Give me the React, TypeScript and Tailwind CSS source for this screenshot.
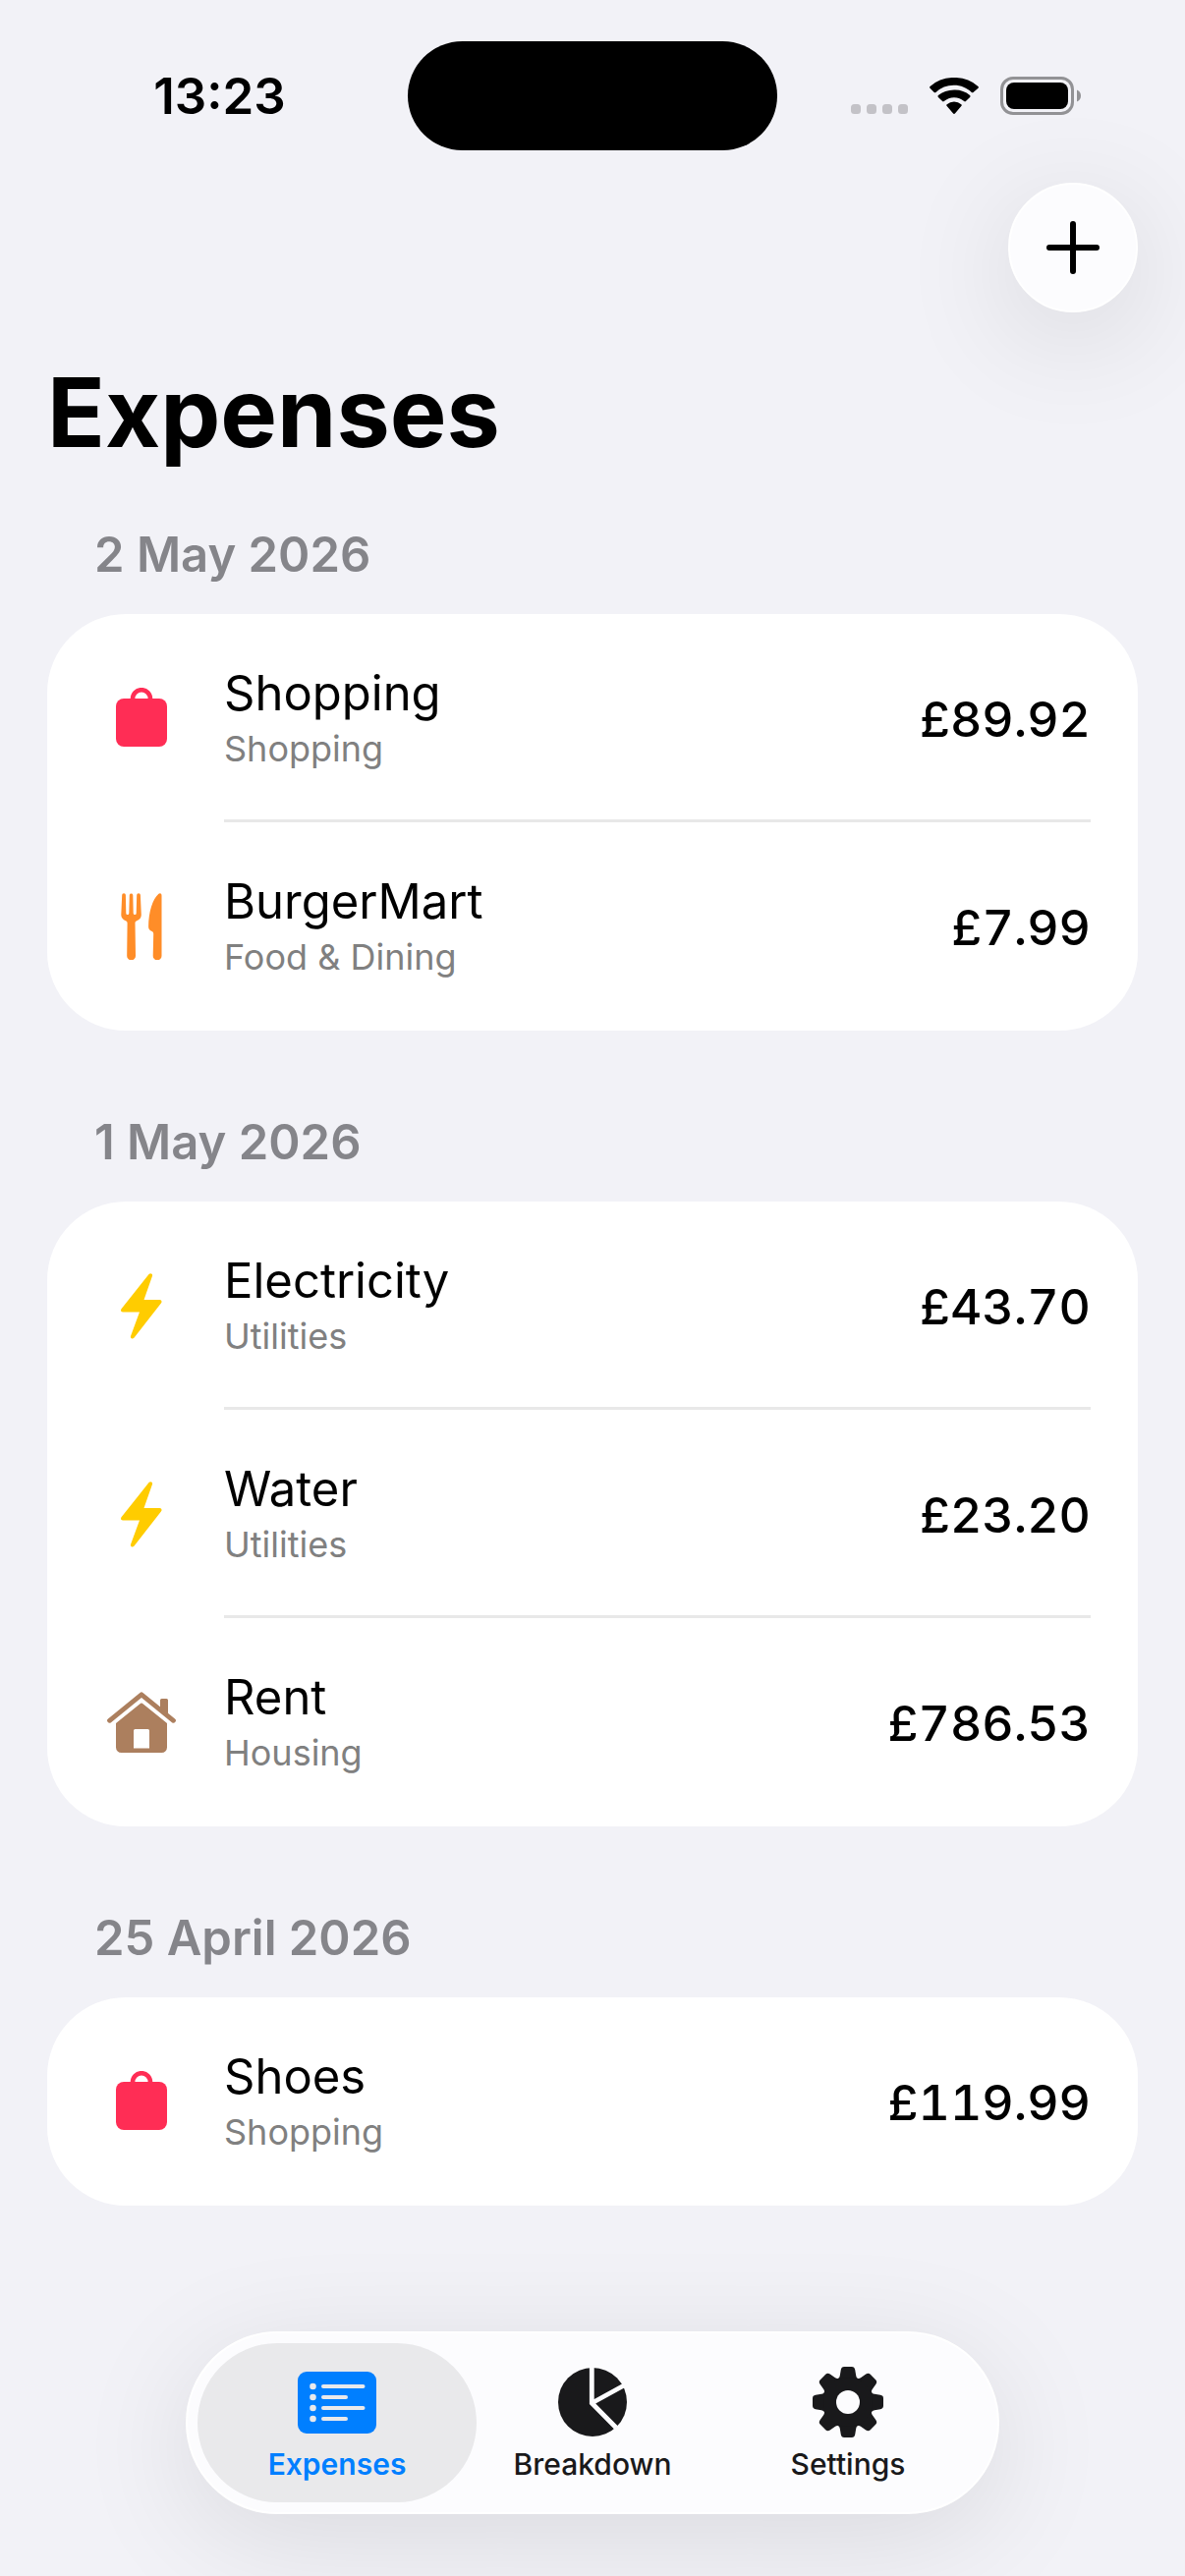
import { useState } from "react";
import type { ReactNode } from "react";

type Category = "Shopping" | "Food & Dining" | "Utilities" | "Housing";

type Expense = {
  id: number;
  name: string;
  category: Category;
  amount: number;
};

type Day = {
  date: string;
  expenses: Expense[];
};

const DAYS: Day[] = [
  {
    date: "2 May 2026",
    expenses: [
      { id: 1, name: "Shopping", category: "Shopping", amount: 89.92 },
      { id: 2, name: "BurgerMart", category: "Food & Dining", amount: 7.99 },
    ],
  },
  {
    date: "1 May 2026",
    expenses: [
      { id: 3, name: "Electricity", category: "Utilities", amount: 43.7 },
      { id: 4, name: "Water", category: "Utilities", amount: 23.2 },
      { id: 5, name: "Rent", category: "Housing", amount: 786.53 },
    ],
  },
  {
    date: "25 April 2026",
    expenses: [{ id: 6, name: "Shoes", category: "Shopping", amount: 119.99 }],
  },
];

function BagIcon() {
  return (
    <svg viewBox="0 0 52 62" className="h-[62px] w-[52px]" fill="#ff2d55" aria-hidden="true">
      <rect x="0" y="11" width="52" height="49" rx="8" />
      <path d="M17 13v-1.500a9 9.300 0 0 1 18 0v1.500" fill="none" stroke="#ff2d55" strokeWidth="4.600" />
    </svg>
  );
}

function CutleryIcon() {
  return (
    <svg viewBox="0 0 42 68" className="h-[68px] w-[42px]" fill="#ff8d28" aria-hidden="true">
      <path d="M1.2 2a1.8 1.8 0 0 1 3.7 0L5.3 20.500a1.500 1.500 0 0 0 3 0L8.800 2a1.800 1.800 0 0 1 3.500 0l.4 18.500a1.500 1.500 0 0 0 3 0L16.200 2a1.800 1.800 0 0 1 3.700 0L20.800 22c.1 3-1.800 5-4.700 6.200-1.300.6-1.700 1.200-1.600 2.600L15 64a4.400 4.400 0 0 1-8.800 0l.4-33.200c0-1.400-.4-2-1.600-2.600C2 27 .2 25 .3 22Z" />
      <path d="M41.500 2.500V64a4.400 4.400 0 0 1-8.800 0l.5-22.500c0-1.200-.4-1.900-1.500-2.500-2.200-1-3.700-2.300-3.600-5C28.200 20 32 6 38.500.7c1.500-1.200 3-.3 3 1.800Z" />
    </svg>
  );
}

function BoltIcon() {
  return (
    <svg viewBox="0 0 42 67" className="h-[67px] w-[42px]" fill="#ffcc00" aria-hidden="true">
      <path d="M28.700.8c1.500-1.500 4-.2 3.300 1.900L23.500 27H39.500c1.900 0 2.700 2 1.400 3.400L13.400 65.700c-1.500 1.800-4.200.4-3.300-1.900L19 39.400H2c-1.900 0-2.600-1.900-1.300-3.300Z" />
    </svg>
  );
}

function HouseIcon() {
  return (
    <svg viewBox="0 0 70 62" className="h-[62px] w-[70px]" fill="#ac7f5e" aria-hidden="true">
      <path d="M2.500 29.300 35 2.800l32.500 26.500" fill="none" stroke="#ac7f5e" strokeWidth="4.800" strokeLinecap="round" strokeLinejoin="round" />
      <path d="M54 18V8.500A1.500 1.500 0 0 1 55.500 7h5A1.500 1.500 0 0 1 62 8.500V24Z" />
      <path fillRule="evenodd" d="M9 32 33.500 12.200a2.400 2.400 0 0 1 3 0L61 32v24.500a5.500 5.500 0 0 1-5.500 5.500h-41A5.500 5.500 0 0 1 9 56.500ZM28.500 38a1.500 1.500 0 0 0-1.500 1.500V57.500H43V39.500A1.500 1.500 0 0 0 41.500 38Z" />
    </svg>
  );
}

const CATEGORY_ICON: Record<Category, () => ReactNode> = {
  Shopping: BagIcon,
  "Food & Dining": CutleryIcon,
  Utilities: BoltIcon,
  Housing: HouseIcon,
};

function ListIcon() {
  const rows = [15, 26, 37, 48];
  return (
    <svg viewBox="0 0 80 63" className="h-[63px] w-20" aria-hidden="true">
      <rect width="80" height="63" rx="9" fill="currentColor" />
      {rows.map((y, i) => (
        <g key={y} fill="#e9e9eb" stroke="#e9e9eb">
          <circle cx="15.500" cy={y} r="3.300" stroke="none" />
          <path d={i % 2 === 0 ? `M26 ${y}H66.500` : `M26 ${y}H49`} strokeWidth="4" strokeLinecap="round" />
        </g>
      ))}
    </svg>
  );
}

function PieIcon() {
  return (
    <svg viewBox="0 0 70 70" className="size-[70px]" fill="none" aria-hidden="true">
      <circle cx="35" cy="35" r="35" fill="currentColor" />
      <path d="M34.300 0V36L59 61M34.300 36 68 17.500" stroke="#fcfcfe" strokeWidth="4.800" />
    </svg>
  );
}

function GearIcon() {
  const teeth = [0, 45, 90, 135, 180, 225, 270, 315];
  return (
    <svg viewBox="-36 -36 72 72" className="size-[72px]" fill="currentColor" aria-hidden="true">
      {teeth.map((angle) => (
        <path
          key={angle}
          transform={`rotate(${angle})`}
          d="M-12.500-22.500C-9.500-24-8.600-24.800-8.200-27L-7.200-33C-6.800-35-5.800-36-3.800-36H3.800C5.800-36 6.800-35 7.200-33L8.200-27C8.600-24.800 9.500-24 12.500-22.500L0 0Z"
        />
      ))}
      <circle r="25" />
      <circle r="12" fill="#fcfcfe" />
    </svg>
  );
}

function StatusBar() {
  return (
    <div className="flex items-center pt-[42px]">
      <div className="flex flex-1 justify-center pl-8 text-[51px] leading-none font-semibold">13:23</div>
      <div className="h-[111px] w-[376px] rounded-full bg-black" />
      <div className="flex flex-1 items-center justify-center gap-[22px] pr-8">
        <svg viewBox="0 0 58 38" className="h-[38px] w-[58px]" fill="#c3c2c7" aria-hidden="true">
          <rect x="0" y="27" width="10" height="10" rx="3.500" />
          <rect x="16" y="27" width="10" height="10" rx="3.500" />
          <rect x="32" y="27" width="10" height="10" rx="3.500" />
          <rect x="48" y="27" width="10" height="10" rx="3.500" />
        </svg>
        <svg viewBox="0 0 50 37" className="h-[37px] w-[50px]" aria-hidden="true">
          <path d="M25 7.700c6.900 0 13.200 2.700 17.800 7.200a1.200 1.200 0 0 0 1.700 0l5-4.200a1.200 1.200 0 0 0 0-1.700A35 35 0 0 0 25 0 35 35 0 0 0 .500 9a1.200 1.200 0 0 0 0 1.700l4.200 4.200a1.200 1.200 0 0 0 1.700 0A26.500 26.500 0 0 1 25 7.700Z" />
          <path d="M25 20.200c3.900 0 7.500 1.500 10.200 3.900a1.200 1.200 0 0 0 1.700 0l4.200-4.200a1.200 1.200 0 0 0 0-1.800A23.500 23.500 0 0 0 25 12.600c-6.200 0-11.900 2.100-16.100 5.500a1.200 1.200 0 0 0 0 1.800l4.200 4.200a1.200 1.200 0 0 0 1.700 0A15.200 15.200 0 0 1 25 20.200Z" />
          <path d="M32.300 29a1.200 1.200 0 0 0 0-1.800 11.300 11.300 0 0 0-14.600 0 1.200 1.200 0 0 0 0 1.800l6.400 7.500a1.200 1.200 0 0 0 1.800 0Z" />
        </svg>
        <svg viewBox="0 0 82 39" className="h-[39px] w-[82px]" aria-hidden="true">
          <rect x="1.500" y="1.500" width="72" height="36" rx="11.500" fill="none" stroke="#929295" strokeWidth="3" />
          <rect x="6" y="6" width="63" height="27" rx="8" />
          <path d="M78 13.500c2.500 1 4 3.200 4 6s-1.500 5-4 6Z" fill="#929295" />
        </svg>
      </div>
    </div>
  );
}

function ExpenseRow({ expense }: { expense: Expense }) {
  const Icon = CATEGORY_ICON[expense.category];
  return (
    <li className="group flex gap-9">
      <div className="flex w-24 shrink-0 items-center justify-center">
        <Icon />
      </div>
      <div className="flex h-[212px] flex-1 items-center justify-between border-b-[3px] border-[#e8e8e8] pt-[5px] group-last:border-transparent">
        <div>
          <p className="text-[49px] leading-[60px]">{expense.name}</p>
          <p className="text-[36px] leading-[52px] text-[#808080]">{expense.category}</p>
        </div>
        <p className="text-[50px] leading-[60px] font-medium tabular-nums">£{expense.amount.toFixed(2)}</p>
      </div>
    </li>
  );
}

const TABS: { label: string; icon: () => ReactNode }[] = [
  { label: "Expenses", icon: ListIcon },
  { label: "Breakdown", icon: PieIcon },
  { label: "Settings", icon: GearIcon },
];

export default function App() {
  const [activeTab, setActiveTab] = useState("Expenses");

  return (
    <div className="flex min-h-screen flex-col overflow-x-clip bg-[#f2f2f7] font-['Inter',sans-serif] text-black">
      <StatusBar />

      <header className="px-12 pt-[33px]">
        <div className="flex justify-end">
          <button
            type="button"
            aria-label="Add expense"
            className="flex size-[132px] items-center justify-center rounded-full border-2 border-white bg-[#fcfcfe] shadow-[0_24px_120px_rgba(0,0,0,0.12)]"
          >
            <svg viewBox="0 0 54 54" className="size-[54px]" aria-hidden="true">
              <path d="M27 3v48M3 27h48" stroke="currentColor" strokeWidth="6" strokeLinecap="round" />
            </svg>
          </button>
        </div>
        <h1 className="pt-[42px] text-[97px] leading-[120px] font-bold">Expenses</h1>
      </header>

      <main className="flex flex-col gap-[84px] px-12 pt-[55px]">
        {DAYS.map((day) => (
          <section key={day.date}>
            <h2 className="px-12 pb-[30px] text-[49px] leading-[60px] font-semibold text-[#85858a]">{day.date}</h2>
            <ul className="rounded-[80px] bg-white px-12">
              {day.expenses.map((expense) => (
                <ExpenseRow key={expense.id} expense={expense} />
              ))}
            </ul>
          </section>
        ))}
      </main>

      <footer className="sticky bottom-0 mt-auto flex justify-center pb-[63px]">
        <nav className="flex -space-x-6 rounded-full border-2 border-white bg-[#fcfcfe] p-[10px] shadow-[0_24px_120px_rgba(0,0,0,0.1)]">
          {TABS.map(({ label, icon: Icon }) => {
            const active = label === activeTab;
            return (
              <button
                key={label}
                type="button"
                aria-current={active ? "page" : undefined}
                onClick={() => setActiveTab(label)}
                className={
                  active
                    ? "flex h-[162px] w-[284px] flex-col items-center rounded-full bg-[#e9e9eb] pt-6 font-semibold text-[#007fff]"
                    : "flex h-[162px] w-[284px] flex-col items-center rounded-full pt-6 font-medium text-[#19191b]"
                }
              >
                <span className="flex h-[72px] items-center">
                  <Icon />
                </span>
                <span className="pt-[7px] text-[30px] leading-[40px]">{label}</span>
              </button>
            );
          })}
        </nav>
      </footer>
    </div>
  );
}
